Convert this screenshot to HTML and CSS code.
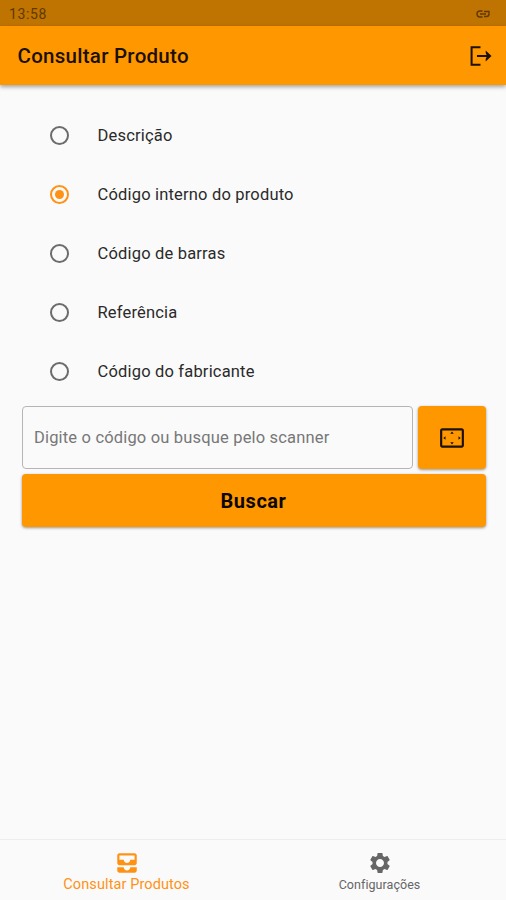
FILE: index.html
```html
<!DOCTYPE html>
<html lang="pt-BR">
<head>
<meta charset="utf-8">
<title>Consultar Produto</title>
<link rel="stylesheet" href="styles.css">
</head>
<body>
<div class="status"><span class="time">13:58</span>
<svg class="link" width="14" height="8" viewBox="0 0 14 8"><path d="M6.5 1H4a3 3 0 0 0 0 6h2.500M4 4h6M8 1.500h5V4c0 1.800-.8 2.500-2.500 2.500H8"/></svg></div>
<header class="appbar"><h1>Consultar Produto</h1>
<svg class="logout" width="24" height="22" viewBox="0 0 24 22"><path class="line" d="M11.500 2.200H2.600v17.600h8.900M8 11h12"/><path d="M16.700 5.600 22.500 11l-5.800 5.400V14l1.300-3-1.300-3z"/></svg></header>
<main>
<div class="options" role="radiogroup">
<div class="option"><i class="radio"></i><span>Descrição</span></div>
<div class="option"><i class="radio on"></i><span>Código interno do produto</span></div>
<div class="option"><i class="radio"></i><span>Código de barras</span></div>
<div class="option"><i class="radio"></i><span>Referência</span></div>
<div class="option"><i class="radio"></i><span>Código do fabricante</span></div>
</div>
<div class="search">
<div class="field"><span>Digite o código ou busque pelo scanner</span></div>
<button class="scan" aria-label="Scanner"><svg width="26" height="26" viewBox="0 0 24 24"><path d="M12 6 10.400 8h3.200zM18 10.400v3.200l2-1.600zM6 10.400 4 12l2 1.600zM13.600 16h-3.200l1.600 2zM21 3H3c-1.100 0-2 .9-2 2v14c0 1.100.9 2 2 2h18c1.100 0 2-.9 2-2V5c0-1.100-.9-2-2-2zm0 16.010H3V4.990h18v14.020z"/></svg></button>
</div>
<button class="submit"><span>Buscar</span></button>
</main>
<nav>
<div class="tab active"><svg width="26" height="26" viewBox="0 0 24 24"><path d="M19 3H5c-1.100 0-2 .9-2 2v7c0 1.100.9 2 2 2h14c1.100 0 2-.9 2-2V5c0-1.100-.9-2-2-2zm0 6h-4c0 1.620-1.380 3-3 3s-3-1.380-3-3H5V5h14v4zm-4 7h6v3c0 1.100-.9 2-2 2H5c-1.100 0-2-.9-2-2v-3h6c0 1.660 1.340 3 3 3s3-1.340 3-3z"/></svg><span>Consultar Produtos</span></div>
<div class="tab"><svg width="24" height="26" viewBox="0 0 24 24"><path d="M19.430 12.980c.04-.32.07-.64.07-.98s-.03-.66-.07-.98l2.110-1.650c.19-.15.24-.42.12-.64l-2-3.460c-.12-.22-.39-.3-.61-.22l-2.490 1c-.52-.4-1.080-.73-1.690-.98l-.38-2.650C14.460 2.180 14.250 2 14 2h-4c-.25 0-.46.18-.49.42l-.38 2.650c-.61.25-1.170.59-1.690.98l-2.490-1c-.23-.09-.49 0-.61.22l-2 3.460c-.13.22-.07.49.12.64l2.110 1.650c-.04.32-.07.65-.07.98s.03.66.07.98l-2.110 1.650c-.19.15-.24.42-.12.64l2 3.460c.12.22.39.3.61.22l2.490-1c.52.4 1.080.73 1.690.98l.38 2.650c.03.24.24.42.49.42h4c.25 0 .46-.18.49-.42l.38-2.650c.61-.25 1.170-.59 1.690-.98l2.490 1c.23.09.49 0 .61-.22l2-3.460c.12-.22.07-.49-.12-.64zM12 16c-2.200 0-4-1.800-4-4s1.800-4 4-4 4 1.800 4 4-1.800 4-4 4z"/></svg><span>Configurações</span></div>
</nav>
</body>
</html>
```
FILE: styles.css
```css
* { box-sizing: border-box; }
body {
  margin: 0;
  height: 900px;
  display: flex;
  flex-direction: column;
  background: #fafafa;
  color: #2a2a2a;
  font-family: Roboto, sans-serif;
  overflow: hidden;
}
svg { display: block; fill: currentColor; flex: none; }
.status {
  height: 26px;
  flex: none;
  display: flex;
  align-items: center;
  justify-content: space-between;
  padding: 1px 16px 0 9px;
  background: #bf7300;
  color: #5f3900;
}
.time { font-size: 14px; letter-spacing: .6px; }
.link { fill: none; stroke: currentColor; stroke-width: 1.4; }
.appbar {
  height: 59px;
  flex: none;
  display: flex;
  align-items: center;
  justify-content: space-between;
  padding: 0 13px 0 17.500px;
  background: #ff9800;
  color: #1c1000;
  box-shadow: 0 2px 4px rgba(0, 0, 0, .35);
}
h1 { margin: 0; font-size: 20.500px; font-weight: 500; letter-spacing: .27px; }
.logout .line { fill: none; stroke: currentColor; stroke-width: 2; }
main { flex: 1; padding: 21px 20px 0 22px; }
.option {
  height: 59px;
  display: flex;
  align-items: center;
  gap: 28.500px;
  padding-left: 28px;
  font-size: 16.500px;
  letter-spacing: .18px;
}
.radio {
  width: 19px;
  height: 19px;
  border: 2px solid #6c6c6c;
  border-radius: 50%;
  display: grid;
  place-items: center;
}
.radio.on { border-color: #ff9214; }
.radio.on::after {
  content: "";
  width: 9px;
  height: 9px;
  border-radius: 50%;
  background: #ff9214;
}
.search { display: flex; gap: 5px; margin-top: 5px; height: 63px; }
.field {
  flex: 1;
  display: flex;
  align-items: center;
  padding-left: 11px;
  border: 1px solid #b5b5b5;
  border-radius: 4px;
  color: #777;
  font-size: 16.500px;
  letter-spacing: .17px;
}
button {
  display: flex;
  align-items: center;
  justify-content: center;
  padding: 0;
  border: 0;
  border-radius: 4px;
  background: #ff9800;
  color: #1c1000;
  font-family: inherit;
  box-shadow: 0 1px 3px rgba(0, 0, 0, .4);
}
.scan { width: 68px; }
.submit { width: 100%; height: 53px; margin-top: 5px; padding-right: 1px; color: #0c0700; font-size: 20px; font-weight: 700; letter-spacing: .55px; }
nav {
  height: 61px;
  flex: none;
  display: flex;
  border-top: 1px solid #ededed;
}
.tab {
  flex: 1;
  display: flex;
  flex-direction: column;
  align-items: center;
  padding-top: 10px;
  color: #666;
  font-size: 12.500px;
  letter-spacing: .05px;
}
.tab span { line-height: 18px; }
.tab.active { color: #ff9214; font-size: 14.500px; letter-spacing: .1px; }
```
